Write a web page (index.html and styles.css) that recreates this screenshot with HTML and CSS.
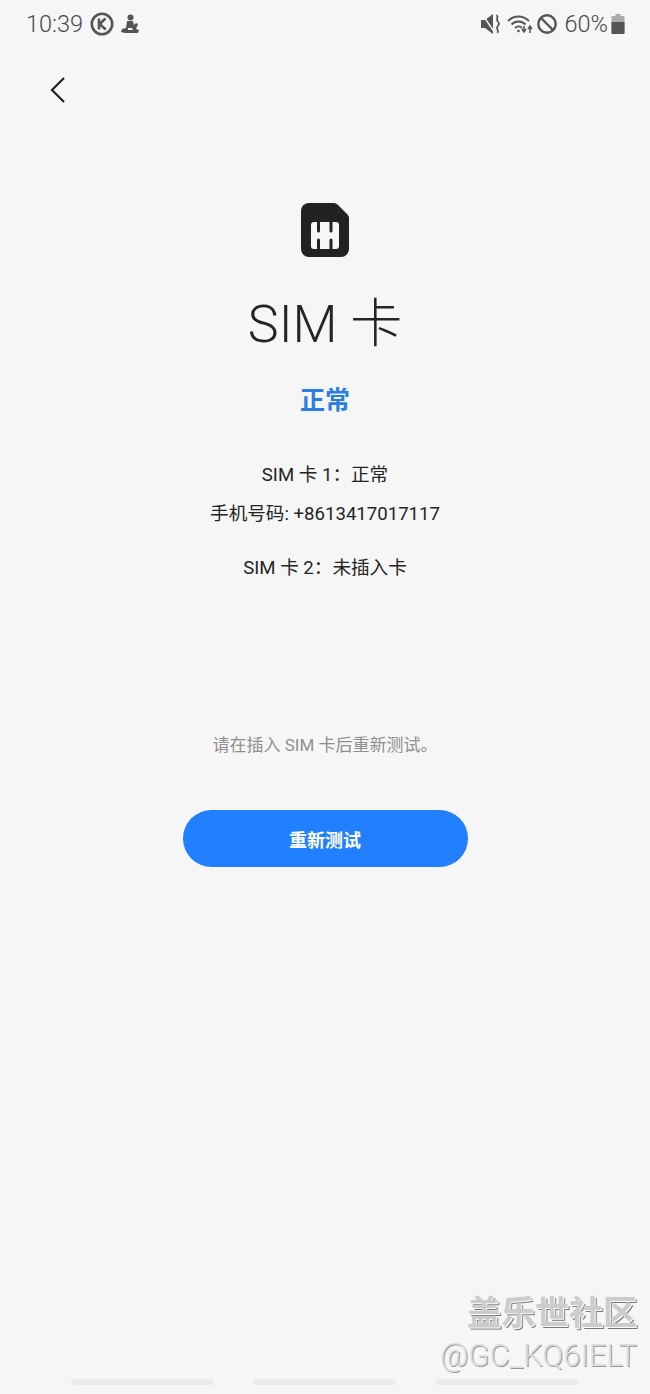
FILE: index.html
```html
<!DOCTYPE html>
<html lang="zh-CN">
<head>
  <meta charset="UTF-8">
  <title>SIM 卡</title>
  <link rel="stylesheet" href="styles.css">
</head>
<body>
  <div class="screen">
    <!-- Status bar -->
    <div class="status-bar">
      <div class="status-group">
        <span class="status-text">10:39</span>
        <svg class="icon-k" viewBox="0 0 24 24" width="24" height="24">
          <circle cx="12" cy="12" r="10.2" fill="none" stroke="#555" stroke-width="2.6"/>
          <path d="M9 6.5v11M15.5 6.5 9.6 12l6.200 5.500" fill="none" stroke="#555" stroke-width="2.6"/>
        </svg>
        <svg class="icon-figure" viewBox="0 0 18 20" width="18" height="20">
          <circle cx="9.500" cy="3.500" r="3" fill="#555"/>
          <path d="M6 7h6l1 4 2-2 2 1-2 5 3 1-1 3H4l-4-1 1-3 4-1z" fill="#555"/>
          <path d="M7 14h4l1 2H7z" fill="#f6f6f6"/>
        </svg>
      </div>
      <div class="status-group right">
        <svg class="icon-mute" viewBox="0 0 20 20" width="20" height="20">
          <path d="M0 6h4l8-6v20l-8-6H0z" fill="#555"/>
          <path d="M1 0l13 19" stroke="#f6f6f6" stroke-width="1.400"/>
          <path d="M15.500 1c3 2.500-1 3.500 1 6s2 3 0 5.500 2 3.500 0 6.500" fill="none" stroke="#555" stroke-width="1.800"/>
        </svg>
        <svg class="icon-wifi" viewBox="0 0 26 20" width="26" height="20">
          <path d="M1 7c6-6 15-6 21 0M4.500 10.500c4-4 10-4 14 0M8 14c2-2 5-2 7 0" fill="none" stroke="#555" stroke-width="1.800"/>
          <circle cx="11.500" cy="17" r="1.300" fill="#555"/>
          <path d="M17 12v5m-2-2 2 3 2-3M23 19v-6m-2 2 2-3 2 3" fill="none" stroke="#555" stroke-width="1.500"/>
        </svg>
        <svg class="icon-block" viewBox="0 0 22 22" width="22" height="22">
          <circle cx="11" cy="11" r="8.700" fill="none" stroke="#555" stroke-width="2.400"/>
          <path d="M5 5l12 12" stroke="#555" stroke-width="2.400"/>
        </svg>
        <span class="status-text pct">60%</span>
        <svg viewBox="0 0 14 20" width="14" height="20">
          <path d="M4.500 0h5v2h3a1 1 0 0 1 1 1v16a1 1 0 0 1-1 1h-11a1 1 0 0 1-1-1V3a1 1 0 0 1 1-1h3z" fill="#aaa"/>
          <path d="M.5 8h13v11a1 1 0 0 1-1 1h-11a1 1 0 0 1-1-1z" fill="#555"/>
        </svg>
      </div>
    </div>

    <div class="toolbar">
      <svg viewBox="0 0 18 28" width="18" height="28">
        <path d="M15 2 3 14l12 12" fill="none" stroke="#222" stroke-width="2.200"/>
      </svg>
    </div>

    <div class="content">
      <svg class="sim-icon" viewBox="0 0 48 54" width="48" height="54">
        <path d="M8 0h25q2 0 3.500 1.500l10 10q1.500 1.500 1.500 3.500v31a8 8 0 0 1-8 8H8a8 8 0 0 1-8-8V8a8 8 0 0 1 8-8z" fill="#222"/>
        <path d="M13 19h22a3 3 0 0 1 3 3v21a3 3 0 0 1-3 3H13a3 3 0 0 1-3-3V22a3 3 0 0 1 3-3z" fill="#f6f6f6"/>
        <path d="M17.500 17v11M30 17v11M17.500 37v11M30 37v11" stroke="#222" stroke-width="3" stroke-linecap="round"/>
      </svg>
      <h1 class="title">SIM 卡</h1>
      <div class="status-ok">正常</div>
      <div class="sim-info">
        <p>SIM 卡 1：正常</p>
        <p>手机号码: +8613417017117</p>
        <p class="sim-two">SIM 卡 2：未插入卡</p>
      </div>
      <p class="hint">请在插入 SIM 卡后重新测试。</p>
      <button class="retest">重新测试</button>
    </div>

    <div class="nav-bar">
      <span></span><span></span><span></span>
    </div>

    <div class="watermark">
      <div class="wm-title">盖乐世社区</div>
      <div class="wm-user">@GC_KQ6IELT</div>
    </div>
  </div>
</body>
</html>
```

FILE: styles.css
```css
* {
  box-sizing: border-box;
}

body {
  margin: 0;
  background: #f6f6f6;
  font-family: Roboto, "Noto Sans CJK SC", sans-serif;
  color: #252525;
}

.screen {
  position: relative;
  display: flex;
  flex-direction: column;
  height: 1394px;
  overflow: hidden;
}

.status-bar {
  display: flex;
  justify-content: space-between;
  align-items: center;
  height: 48px;
  padding: 0 25px 0 26px;
  color: #4a4a4a;
}

.status-group {
  display: flex;
  align-items: center;
  gap: 7px;
}

.status-group.right {
  gap: 3px;
}

.status-text {
  font-size: 23.500px;
  font-weight: 300;
}

.icon-wifi {
  margin-left: 3px;
}

.pct {
  margin-left: 4px;
}

.toolbar {
  display: flex;
  align-items: center;
  height: 84px;
  padding-left: 49px;
}

.content {
  display: flex;
  flex-direction: column;
  align-items: center;
  flex: 1;
  padding-top: 71px;
}

.sim-icon {
  display: block;
}

.title {
  margin: 35px 0 0;
  font-size: 52px;
  font-weight: 300;
  line-height: 66px;
}

.status-ok {
  margin-top: 26px;
  font-size: 25px;
  font-weight: 700;
  line-height: 34px;
  color: #2a7de1;
}

.sim-info {
  margin-top: 38px;
  text-align: center;
  font-size: 18.600px;
}

.sim-info p {
  margin: 0;
  line-height: 39px;
}

.sim-info .sim-two {
  margin-top: 15px;
}

.hint {
  margin: 145px 0 0;
  font-size: 17px;
  line-height: 24px;
  color: #8f8f8f;
}

.retest {
  width: 285px;
  height: 57px;
  margin-top: 53px;
  border: none;
  border-radius: 29px;
  background: #2080ff;
  color: #fff;
  font-family: inherit;
  font-size: 18px;
  font-weight: 700;
}

.nav-bar {
  display: flex;
  justify-content: center;
  gap: 39px;
  height: 15px;
  padding-right: 1px;
}

.nav-bar span {
  width: 143px;
  height: 6px;
  border-radius: 3px;
  background: #ececec;
}

.watermark {
  position: absolute;
  right: 13px;
  bottom: 18px;
  text-align: right;
}

.wm-title {
  font-size: 34px;
  font-weight: 700;
  line-height: 46px;
  color: #ccc;
  text-shadow: 1px 1px 0 #fff, 2px 2px 0 #777;
}

.wm-user {
  font-size: 31px;
  line-height: 40px;
  font-weight: 300;
  color: #ddd;
  text-shadow: 1px 1px 0 #999;
}
```
